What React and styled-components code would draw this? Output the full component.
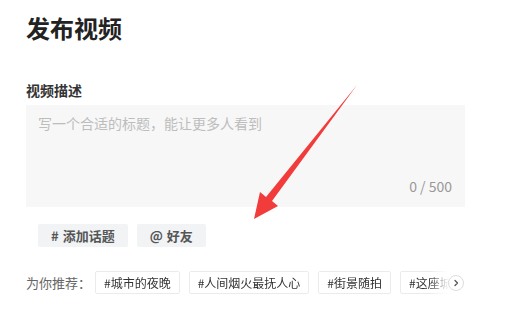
import React from "react";
import styled, { createGlobalStyle } from "styled-components";

const GlobalStyle = createGlobalStyle`
  html, body {
    margin: 0;
    padding: 0;
    background: #fff;
  }
  body {
    font-family: "Noto Sans CJK SC", "Noto Sans", "Liberation Sans", sans-serif;
  }
`;

const Page = styled.div`
  position: relative;
  width: 529px;
  height: 312px;
  padding: 12px 0 0 26px;
  box-sizing: border-box;
  overflow: hidden;
`;

const Title = styled.h1`
  margin: 0;
  font-size: 24px;
  line-height: 32px;
  font-weight: 700;
  color: #222;
`;

const Label = styled.div`
  margin-top: 36px;
  font-size: 14px;
  line-height: 20px;
  font-weight: 600;
  color: #333;
`;

const Editor = styled.div`
  margin-top: 5px;
  width: 439px;
  height: 102px;
  box-sizing: border-box;
  padding: 8px 13px 12px 12px;
  background: #f7f7f7;
  display: flex;
  flex-direction: column;
  justify-content: space-between;
`;

const Placeholder = styled.div`
  font-size: 14px;
  line-height: 20px;
  color: #bdbdbd;
`;

const Counter = styled.div`
  align-self: flex-end;
  font-size: 14px;
  line-height: 18px;
  color: #999;
`;

const Actions = styled.div`
  display: flex;
  gap: 9px;
  margin: 17px 0 0 12px;
`;

const ActionButton = styled.button`
  height: 23px;
  padding: 0 13px;
  border: none;
  border-radius: 2px;
  background: #f2f3f5;
  font-family: inherit;
  font-size: 13px;
  font-weight: 600;
  color: #555;
  display: flex;
  align-items: center;
  gap: 4px;
`;

const RecRow = styled.div`
  margin-top: 24px;
  width: 439px;
  display: flex;
  align-items: center;
  gap: 4px;
`;

const RecLabel = styled.span`
  flex-shrink: 0;
  font-size: 13px;
  color: #666;
`;

const TrackWrap = styled.div`
  position: relative;
  flex: 1;
  display: flex;
  min-width: 0;
`;

const TagTrack = styled.div`
  flex: 1;
  overflow: hidden;
  display: flex;
  gap: 9px;
  -webkit-mask-image: linear-gradient(to right, #000 calc(100% - 36px), transparent calc(100% - 16px));
  mask-image: linear-gradient(to right, #000 calc(100% - 36px), transparent calc(100% - 16px));
`;

const Tag = styled.span`
  flex-shrink: 0;
  height: 23px;
  box-sizing: border-box;
  padding: 0 8px;
  border: 1px solid #ebebeb;
  border-radius: 2px;
  background: #fff;
  font-size: 12px;
  line-height: 21px;
  color: #333;
`;

const NextButton = styled.span`
  position: absolute;
  right: 1px;
  top: 50%;
  transform: translateY(-50%);
  width: 16px;
  height: 16px;
  border-radius: 50%;
  border: 1px solid #ddd;
  background: #fff;
  box-sizing: border-box;
  display: flex;
  align-items: center;
  justify-content: center;
`;

const Arrow = styled.svg`
  position: absolute;
  left: 0;
  top: 0;
  pointer-events: none;
`;

const tags = ["#城市的夜晚", "#人间烟火最抚人心", "#街景随拍", "#这座城"];

export default function App() {
  return (
    <>
      <GlobalStyle />
      <Page>
        <Title>发布视频</Title>
        <Label>视频描述</Label>
        <Editor>
          <Placeholder>写一个合适的标题，能让更多人看到</Placeholder>
          <Counter>0 / 500</Counter>
        </Editor>
        <Actions>
          <ActionButton>
            <span>#</span>
            <span>添加话题</span>
          </ActionButton>
          <ActionButton>
            <span>@</span>
            <span>好友</span>
          </ActionButton>
        </Actions>
        <RecRow>
          <RecLabel>为你推荐：</RecLabel>
          <TrackWrap>
            <TagTrack>
              {tags.map((t) => (
                <Tag key={t}>{t}</Tag>
              ))}
            </TagTrack>
            <NextButton>
              <svg width="8" height="8" viewBox="0 0 8 8">
                <path d="M3 1.5 L5.5 4 L3 6.5" fill="none" stroke="#555" strokeWidth="1.3" strokeLinecap="round" strokeLinejoin="round" />
              </svg>
            </NextButton>
          </TrackWrap>
        </RecRow>
        <Arrow width="529" height="312" viewBox="0 0 529 312">
          <path
            d="M357 85 L272 201 L278 206 L254 219 L260 192 L266 197 Z"
            fill="#f23b3b"
          />
        </Arrow>
      </Page>
    </>
  );
}
